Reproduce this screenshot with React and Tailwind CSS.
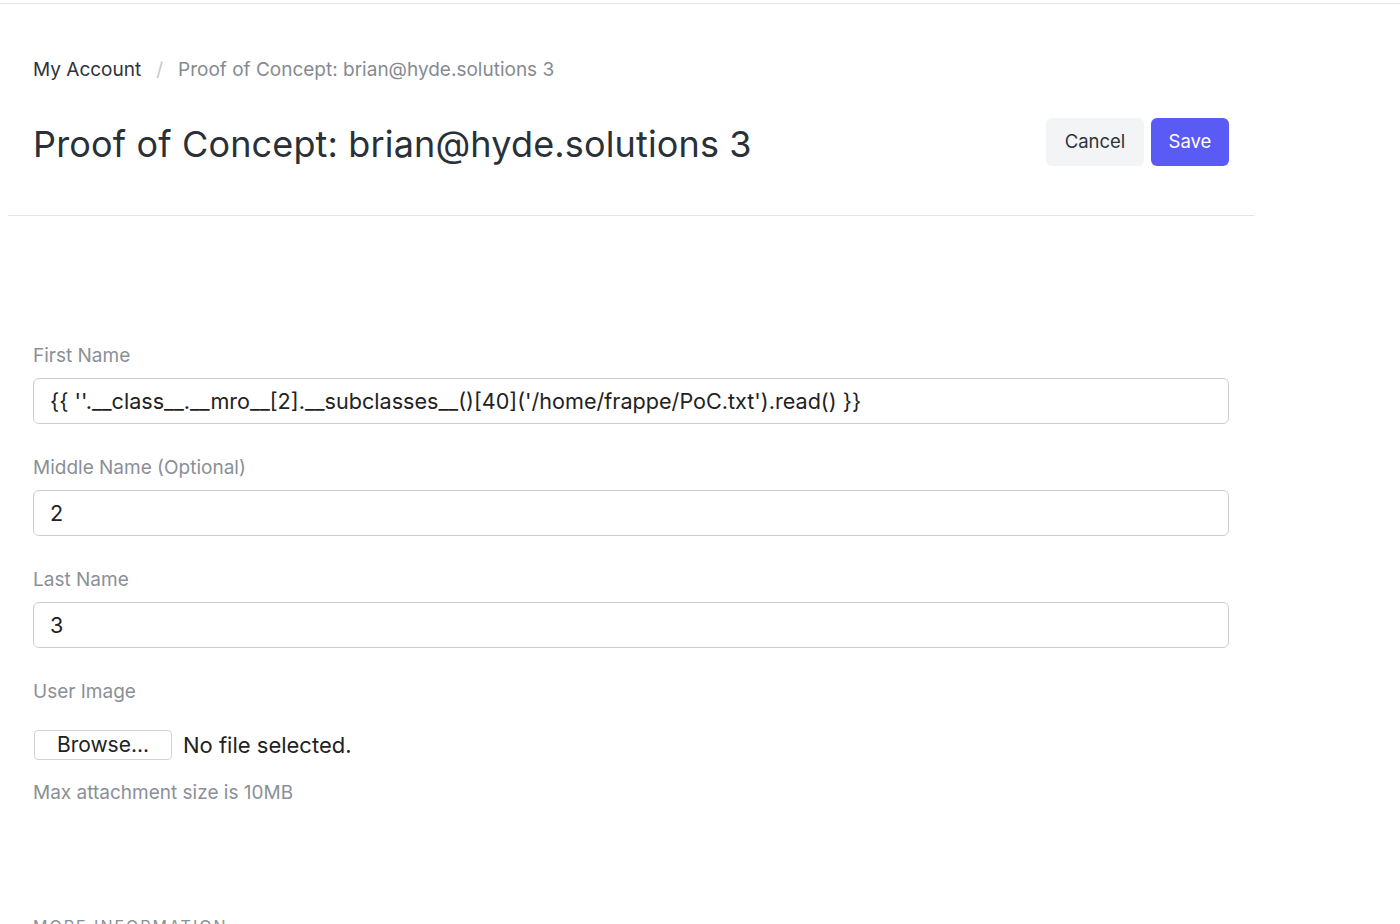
export default function App() {
  const font = { fontFamily: 'Inter, "Noto Sans", sans-serif' };
  const Field = ({ label, value }) => (
    <div className="mb-[30px]">
      <div className="text-[19px] leading-[27px] text-[#8a9096]">{label}</div>
      <div className="mt-[9px] h-[46px] rounded-[6px] border border-[#c9ced3] flex items-center px-[16px] text-[21.6px] text-[#222]">
        {value}
      </div>
    </div>
  );
  return (
    <div className="min-h-screen bg-white overflow-hidden" style={font}>
      <div className="h-[3px]" />
      <div className="h-px bg-[#e5e7eb]" />
      <div className="ml-[8px] w-[1246px]">
        <div className="px-[25px] pt-[52px] pb-[49px] border-b border-[#e2e5e8]">
          <div className="flex items-center text-[19px] leading-[27px]">
            <span className="text-[#2d3339]">My Account</span>
            <span className="mx-[15px] text-[#c4c8cc]">/</span>
            <span className="text-[#858b91]">Proof of Concept: brian@hyde.solutions 3</span>
          </div>
          <div className="mt-[35px] flex items-center justify-between">
            <h1 className="pt-[4px] text-[36px] leading-[44px] text-[#2a3038] tracking-[0.15px]">
              Proof of Concept: brian@hyde.solutions 3
            </h1>
            <div className="flex items-center gap-[7px]">
              <button className="h-[48px] w-[98px] rounded-[6px] bg-[#f3f4f6] text-[18.5px] text-[#2d3339]">Cancel</button>
              <button className="h-[48px] w-[78px] rounded-[6px] bg-[#5a5af5] text-[18.5px] text-white">Save</button>
            </div>
          </div>
        </div>
        <div className="px-[25px] pt-[126px]">
          <Field label="First Name" value={"{{ ''.__class__.__mro__[2].__subclasses__()[40]('/home/frappe/PoC.txt').read() }}"} />
          <Field label="Middle Name (Optional)" value="2" />
          <Field label="Last Name" value="3" />
          <div className="text-[19px] leading-[27px] text-[#8a9096]">User Image</div>
          <div className="mt-[25px] flex items-center h-[30px]">
            <div className="ml-[1px] h-[30px] w-[138px] rounded-[4px] border border-[#d0d3d6] flex items-center justify-center text-[21px] leading-[28px] text-[#222]">
              Browse...
            </div>
            <span className="ml-[11px] text-[22px] leading-[30px] text-[#222]">No file selected.</span>
          </div>
          <div className="mt-[19px] text-[19px] leading-[27px] text-[#8a9096]">Max attachment size is 10MB</div>
          <div className="mt-[110px] text-[16px] leading-[20px] tracking-[2px] uppercase text-[#8a9096]">More Information</div>
        </div>
      </div>
    </div>
  );
}
